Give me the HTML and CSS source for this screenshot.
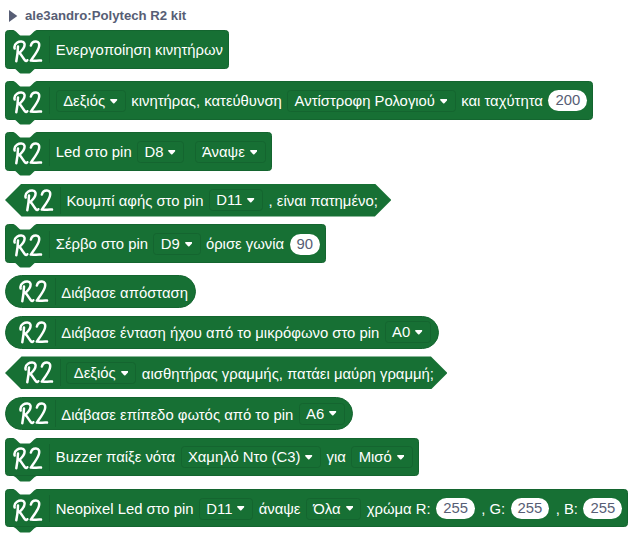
FILE: index.html
```
<!DOCTYPE html>
<html lang="el">
<head>
<meta charset="utf-8">
<title>ale3andro:Polytech R2 kit</title>
<link rel="stylesheet" href="styles.css">
</head>
<body>
<svg class="defs" aria-hidden="true">
  <symbol id="logo" viewBox="0 0 30 24">
    <path class="logo-line" d="M1.600 8.500C1 6 1.900 4.200 4 2.800C6.500 1.100 10.500 1 11.400 3.500C12.300 6.500 9.500 10.200 6.300 13C8.500 14.500 10 18.200 12 20.300C12.800 21.200 13.900 21 14.300 20.200M5 6.500C4.900 11 4.300 16 3.300 21.200M17.900 5.500C18.500 3 20.700 1.400 23 1.500C26 1.700 26.800 4.200 25.800 7.500C24.500 11.800 21 16 17.800 20.600C21 20.900 24.500 20.400 28 20.600"/>
  </symbol>
  <symbol id="notch" viewBox="0 0 26 6"><path d="M0 0H26C24 0 23 .6 22.100 1.500L19.300 4.300C18.500 5.100 17.800 5.500 16.600 5.500H9.400C8.200 5.500 7.500 5.100 6.700 4.300L3.900 1.500C3 .6 2 0 0 0Z"/></symbol>
  <symbol id="arrow" viewBox="0 0 7 5"><path d="M.8 0H6.200C6.900 0 7.200.7 6.700 1.200L4.100 3.900Q3.500 4.400 2.900 3.900L.3 1.200C-.2.7.1 0 .8 0Z"/></symbol>
</svg>
<main class="palette">
  <header class="title"><svg class="toggle" viewBox="0 0 9 12"><path d="M0 0L8.300 6L0 12Z"/></svg><span>ale3andro:Polytech R2 kit</span></header>

  <div class="block stack"><svg class="cut"><use href="#notch"/></svg><svg class="tab"><use href="#notch"/></svg><svg class="logo"><use href="#logo"/></svg><i class="rule"></i><span class="label">Ενεργοποίηση κινητήρων</span></div>

  <div class="block stack"><svg class="cut"><use href="#notch"/></svg><svg class="tab"><use href="#notch"/></svg><svg class="logo"><use href="#logo"/></svg><i class="rule"></i><span class="menu">Δεξιός<svg><use href="#arrow"/></svg></span><span class="label">κινητήρας, κατεύθυνση</span><span class="menu">Αντίστροφη Ρολογιού<svg><use href="#arrow"/></svg></span><span class="label">και ταχύτητα</span><span class="num">200</span></div>

  <div class="block stack"><svg class="cut"><use href="#notch"/></svg><svg class="tab"><use href="#notch"/></svg><svg class="logo"><use href="#logo"/></svg><i class="rule"></i><span class="label">Led στο pin</span><span class="menu">D8<svg><use href="#arrow"/></svg></span><span class="label gap"></span><span class="menu">Άναψε<svg><use href="#arrow"/></svg></span></div>

  <div class="block hex"><svg class="logo"><use href="#logo"/></svg><i class="rule"></i><span class="label">Κουμπί αφής στο pin</span><span class="menu">D11<svg><use href="#arrow"/></svg></span><span class="label">, είναι πατημένο;</span></div>

  <div class="block stack"><svg class="cut"><use href="#notch"/></svg><svg class="tab"><use href="#notch"/></svg><svg class="logo"><use href="#logo"/></svg><i class="rule"></i><span class="label">Σέρβο στο pin</span><span class="menu">D9<svg><use href="#arrow"/></svg></span><span class="label">όρισε γωνία</span><span class="num">90</span></div>

  <div class="block round"><svg class="logo"><use href="#logo"/></svg><i class="rule"></i><span class="label">Διάβασε απόσταση</span></div>

  <div class="block round"><svg class="logo"><use href="#logo"/></svg><i class="rule"></i><span class="label">Διάβασε ένταση ήχου από το μικρόφωνο στο pin</span><span class="menu">A0<svg><use href="#arrow"/></svg></span></div>

  <div class="block hex"><svg class="logo"><use href="#logo"/></svg><i class="rule"></i><span class="menu">Δεξιός<svg><use href="#arrow"/></svg></span><span class="label">αισθητήρας γραμμής, πατάει μαύρη γραμμή;</span></div>

  <div class="block round"><svg class="logo"><use href="#logo"/></svg><i class="rule"></i><span class="label">Διάβασε επίπεδο φωτός από το pin</span><span class="menu">A6<svg><use href="#arrow"/></svg></span></div>

  <div class="block stack"><svg class="cut"><use href="#notch"/></svg><svg class="tab"><use href="#notch"/></svg><svg class="logo"><use href="#logo"/></svg><i class="rule"></i><span class="label">Buzzer παίξε νότα</span><span class="menu">Χαμηλό Ντο (C3)<svg><use href="#arrow"/></svg></span><span class="label">για</span><span class="menu">Μισό<svg><use href="#arrow"/></svg></span></div>

  <div class="block stack"><svg class="cut"><use href="#notch"/></svg><svg class="tab"><use href="#notch"/></svg><svg class="logo"><use href="#logo"/></svg><i class="rule"></i><span class="label">Neopixel Led στο pin</span><span class="menu">D11<svg><use href="#arrow"/></svg></span><span class="label">άναψε</span><span class="menu">Όλα<svg><use href="#arrow"/></svg></span><span class="label">χρώμα R:</span><span class="num">255</span><span class="label channel">, G:</span><span class="num">255</span><span class="label channel">, B:</span><span class="num">255</span></div>
</main>
</body>
</html>
```
FILE: styles.css
```
* { box-sizing: border-box; }
body { margin: 0; background: #fff; overflow: hidden; }
.defs { position: absolute; width: 0; height: 0; }
.palette {
  display: flex; flex-direction: column; align-items: flex-start;
  padding-left: 5px;
  font: 14.85px/22px "Liberation Sans", Arial, sans-serif;
  color: #fff;
}
.title {
  display: flex; align-items: center; gap: 7px;
  height: 30px; padding: 2px 0 0 4px;
  font-size: 13.2px; font-weight: bold; color: #575e75;
}
.toggle { width: 9px; height: 12px; fill: #575e75; }
.block {
  position: relative; display: flex; align-items: center; gap: 5.4px;
  background: #177034; white-space: nowrap; flex: none;
}
.stack {
  height: 38.5px; margin-bottom: 12.7px; padding: 1px 5px 0 7px;
  border: 1px solid #14652f; border-radius: 3.5px;
}
.hex {
  height: 33px; margin-bottom: 7.7px; padding: 0 13.5px 0 18.6px;
  clip-path: polygon(0 50%, 16.5px 0, calc(100% - 16.5px) 0, 100% 50%, calc(100% - 16.5px) 100%, 16.5px 100%);
}
.round {
  height: 33px; margin-bottom: 7.5px; padding: 0 7px 0 12.5px;
  border: 1px solid #14652f; border-radius: 17px;
}
.logo { width: 30px; height: 24px; margin-right: 1px; flex: none; }
.stack .logo { margin-top: 4px; }
.hex .logo, .round .logo { margin-top: 1px; }
.logo-line { fill: none; stroke: #fff; stroke-width: 2.5; stroke-linecap: round; stroke-linejoin: round; }
.rule { width: 1px; height: 27px; background: #14652f; }
.cut, .tab { position: absolute; left: 6px; width: 26px; height: 6px; }
.cut { top: -1px; fill: #fff; }
.tab { top: 37px; fill: #177034; }
.hex .label, .round .label { padding-top: 2px; }
.label.gap { margin-left: -.5px; }
.menu {
  display: flex; align-items: center; gap: 5px;
  height: 22px; padding: 0 7.3px 0 6.4px;
  border: 1px solid #14652f; border-radius: 3.5px;
}
.menu svg { width: 7.5px; height: 5.4px; margin-top: 1px; fill: #fff; }
.channel { margin-left: .8px; }
.num {
  height: 21px; padding: 0 7.100px; border-radius: 11px;
  background: #fff; color: #575e75; line-height: 21px;
}
```
